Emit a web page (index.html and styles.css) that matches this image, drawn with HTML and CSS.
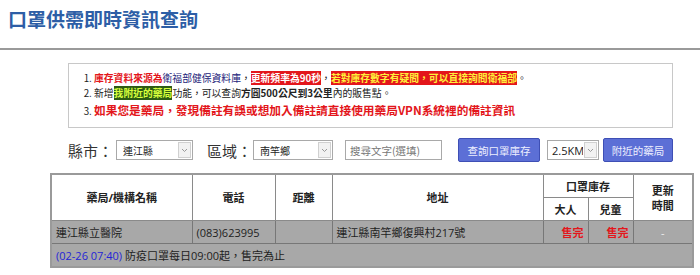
FILE: index.html
```html
<!DOCTYPE html>
<html lang="zh-Hant">
<head>
    <meta charset="UTF-8">
    <title>口罩供需即時資訊查詢</title>
    <link rel="stylesheet" href="styles.css">
</head>
<body>
<div class="header">
    <h1 class="title">口罩供需即時資訊查詢</h1>
</div>
<div class="wrapper">
    <div class="notice">
        <ol class="notice-list">
            <li><span class="red">庫存資料來源為</span><span class="navy">衛福部健保資料庫</span>，<span class="tag-red">更新頻率為90秒</span>，<span class="tag-yellow">若對庫存數字有疑問，可以直接詢問衛福部</span>。</li>
            <li>新增<span class="tag-green">我附近的藥局</span>功能，可以查詢<b>方圓500公尺到3公里</b>內的販售點。</li>
            <li class="last"><span class="big-red">如果您是藥局，發現備註有誤或想加入備註請直接使用藥局VPN系統裡的備註資訊</span></li>
        </ol>
    </div>

    <div class="search-bar">
        <span class="label">縣市：</span>
        <div class="select-box city">
            <select><option>連江縣</option></select>
            <span class="arrow"><svg width="7" height="5" viewBox="0 0 7 5"><path d="M1 1l2.5 2.5L6 1" fill="none" stroke="#999" stroke-width="1"/></svg></span>
        </div>
        <span class="label area-label">區域：</span>
        <div class="select-box area">
            <select><option>南竿鄉</option></select>
            <span class="arrow"><svg width="7" height="5" viewBox="0 0 7 5"><path d="M1 1l2.5 2.5L6 1" fill="none" stroke="#999" stroke-width="1"/></svg></span>
        </div>
        <input class="keyword" type="text" placeholder="搜尋文字(選填)">
        <button class="btn btn-query">查詢口罩庫存</button>
        <div class="select-box range">
            <select><option>2.5KM</option></select>
            <span class="arrow"><svg width="7" height="5" viewBox="0 0 7 5"><path d="M1 1l2.5 2.5L6 1" fill="none" stroke="#999" stroke-width="1"/></svg></span>
        </div>
        <button class="btn btn-near">附近的藥局</button>
    </div>

    <table class="store-table">
        <colgroup>
            <col style="width:141px">
            <col style="width:83px">
            <col style="width:57px">
            <col style="width:211px">
            <col style="width:45px">
            <col style="width:45px">
            <col style="width:60px">
        </colgroup>
        <thead>
        <tr>
            <th rowspan="2">藥局/機構名稱</th>
            <th rowspan="2">電話</th>
            <th rowspan="2">距離</th>
            <th rowspan="2">地址</th>
            <th colspan="2">口罩庫存</th>
            <th rowspan="2">更新<br>時間</th>
        </tr>
        <tr>
            <th>大人</th>
            <th>兒童</th>
        </tr>
        </thead>
        <tbody>
        <tr class="store-row">
            <td>連江縣立醫院</td>
            <td>(083)623995</td>
            <td></td>
            <td>連江縣南竿鄉復興村217號</td>
            <td class="sold">售完</td>
            <td class="sold">售完</td>
            <td class="time">-</td>
        </tr>
        <tr class="note-row">
            <td colspan="7"><span class="stamp">(02-26 07:40)</span> 防疫口罩每日09:00起，售完為止</td>
        </tr>
        </tbody>
    </table>
</div>
</body>
</html>
```

FILE: styles.css
```css
body {
    margin: 0;
    font-family: "Open Sans", "Noto Sans CJK TC", sans-serif;
    color: #222;
    background: #fff;
}

.header {
    height: 50px;
    border-bottom: 2px solid #9a9a9a;
    box-sizing: border-box;
}

.title {
    margin: 0;
    padding: 4px 8px 0;
    font-size: 19px;
    line-height: 30px;
    font-weight: bold;
    color: #2d5ea6;
    font-family: "Noto Sans CJK TC", sans-serif;
}

.wrapper {
    width: 642px;
    margin-left: 50px;
}

.notice {
    margin: 13px 19px 0 18px;
    border: 1px solid #c8c8c8;
    padding: 7px 0 9px;
    font-family: "Noto Sans CJK TC", sans-serif;
}

.notice-list {
    margin: 0;
    padding-left: 25px;
    font-size: 9.8px;
    line-height: 15px;
    color: #222;
}

.notice-list li {
    white-space: nowrap;
    height: 15px;
}

.notice-list li.last {
    height: 17px;
    line-height: 17px;
}

.notice-list .red {
    color: #e3161b;
    font-weight: bold;
}

.notice-list .navy {
    color: #23237a;
}

.tag-red {
    background: #e3161b;
    color: #fff;
    font-weight: bold;
}

.tag-yellow {
    background: #e3161b;
    color: #ffef3a;
    font-weight: bold;
}

.tag-green {
    background: #2d5b14;
    color: #d8ff3c;
    font-weight: bold;
}

.big-red {
    color: #e3161b;
    font-weight: bold;
    font-size: 11.7px;
    line-height: 17px;
}

.search-bar {
    display: flex;
    align-items: center;
    justify-content: center;
    height: 24px;
    margin: 10px 0 11px;
    padding-right: 1px;
}

.search-bar .label {
    font-size: 15px;
    font-family: "Noto Sans CJK TC", sans-serif;
    color: #333;
    margin-right: 3px;
}

.search-bar .area-label {
    margin-left: 14px;
    margin-right: 1px;
}

.select-box {
    display: flex;
    height: 20px;
    border: 1px solid #a9a9a9;
    box-sizing: border-box;
    background: #fff;
}

.select-box select {
    flex: 1;
    min-width: 0;
    appearance: none;
    -webkit-appearance: none;
    border: 0;
    background: transparent;
    padding: 0 0 0 6px;
    font-size: 10px;
    font-family: "Noto Sans CJK TC", sans-serif;
    color: #222;
    outline: none;
}

.select-box .arrow {
    flex: none;
    width: 11px;
    margin: 1px;
    border: 1px solid #d0d0d0;
    background: #f2f2f2;
    display: flex;
    align-items: center;
    justify-content: center;
}

.city {
    width: 77px;
}

.area {
    width: 80px;
}

.range {
    width: 52px;
    margin-left: 7px;
}

.range select {
    font-size: 11px;
    padding-left: 4px;
    font-family: "Open Sans", sans-serif;
}

.keyword {
    width: 97px;
    height: 20px;
    box-sizing: border-box;
    margin-left: 12px;
    border: 1px solid #a9a9a9;
    padding: 0 4px;
    font-size: 10.5px;
    font-family: "Noto Sans CJK TC", sans-serif;
}

.keyword::placeholder {
    color: #777;
}

.btn {
    height: 24px;
    box-sizing: border-box;
    border: 1px solid #3e4fb5;
    border-radius: 2px;
    background: #5c6fd6;
    color: #eef0ff;
    font-size: 10.5px;
    font-family: "Noto Sans CJK TC", sans-serif;
    padding: 0;
}

.btn-query {
    width: 82px;
    margin-left: 16px;
}

.btn-near {
    width: 70px;
    margin-left: 4px;
}

.store-table {
    width: 642px;
    border-collapse: collapse;
    table-layout: fixed;
    border: 2px solid #9a9a9a;
    font-size: 11px;
    font-family: "Open Sans", "Noto Sans CJK TC", sans-serif;
}

.store-table th {
    height: 22px;
    padding: 0;
    border: 1px solid #8a8a8a;
    font-weight: bold;
    color: #222;
    text-align: center;
    line-height: 15px;
    background: #fff;
}

.store-table td {
    height: 22px;
    padding: 0 4px;
    border: 1px solid #777;
    background: #a8a8a8;
    color: #1e1e1e;
    white-space: nowrap;
}

.store-table .sold {
    color: #e3161b;
    font-weight: bold;
    text-align: right;
}

.store-table .time {
    text-align: center;
    color: #eee;
}

.note-row .stamp {
    color: #2424d6;
}
```
